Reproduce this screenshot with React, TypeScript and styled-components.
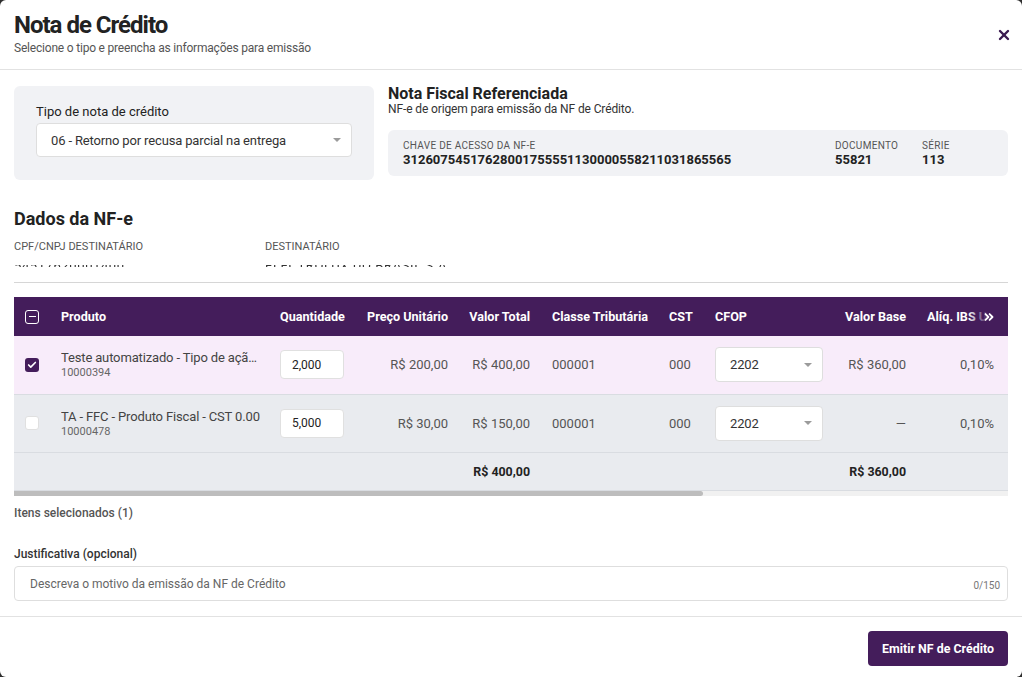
import styled, { createGlobalStyle } from 'styled-components'
import { Check, ChevronsRight, X } from 'lucide-react'

const PURPLE = '#441d5b'

const GlobalStyle = createGlobalStyle`
  html, body {
    margin: 0;
    padding: 0;
    background: #2e2e2e;
  }
  body {
    font-family: Roboto, "Liberation Sans", Arial, sans-serif;
    color: #222;
  }
  * { box-sizing: border-box; }
`

const Modal = styled.div`
  width: 1022px;
  height: 677px;
  background: #fff;
  border-radius: 6px;
  display: flex;
  flex-direction: column;
  overflow: hidden;
`

const Header = styled.header`
  height: 70px;
  border-bottom: 1px solid #e2e2e2;
  display: flex;
  justify-content: space-between;
  align-items: center;
  padding: 0 10px 0 14px;
`

const TitleBlock = styled.div`
  align-self: flex-start;
  padding-top: 11px;
`

const Title = styled.h1`
  margin: 0;
  font-size: 24px;
  line-height: 28px;
  font-weight: 700;
  letter-spacing: -1px;
  color: #222;
`

const Subtitle = styled.p`
  margin: 1px 0 0;
  font-size: 12px;
  line-height: 16px;
  letter-spacing: -0.2px;
  color: #555;
`

const CloseButton = styled.button`
  border: 0;
  background: none;
  padding: 0;
  width: 16px;
  height: 16px;
  display: flex;
  color: #3b1a50;
  cursor: pointer;
`

const Body = styled.main`
  flex: 1;
  padding: 16px 14px 0;
  display: flex;
  flex-direction: column;
`

const TopRow = styled.div`
  display: grid;
  grid-template-columns: 360px 1fr;
  gap: 14px;
  align-items: start;
`

const TypeCard = styled.div`
  background: #f1f2f5;
  border-radius: 6px;
  padding: 18px 22px 23px;
`

const FieldLabel = styled.label`
  display: block;
  font-size: 13px;
  line-height: 16px;
  color: #222;
  margin-bottom: 3px;
`

const SelectBox = styled.div<{ $width?: number; $height: number }>`
  width: ${p => (p.$width ? `${p.$width}px` : '100%')};
  height: ${p => p.$height}px;
  background: #fff;
  border: 1px solid #dedede;
  border-radius: 4px;
  display: flex;
  align-items: center;
  justify-content: space-between;
  padding: 0 10px 0 14px;
  font-size: 13px;
  letter-spacing: -0.15px;
  color: #333;
`

const Caret = styled.span`
  width: 0;
  height: 0;
  border-left: 4px solid transparent;
  border-right: 4px solid transparent;
  border-top: 4px solid #9b9b9b;
`

const RefTitle = styled.h2`
  margin: 0;
  font-size: 16px;
  line-height: 16px;
  font-weight: 700;
  color: #222;
`

const RefSubtitle = styled.p`
  margin: 0;
  font-size: 12px;
  line-height: 14px;
  letter-spacing: -0.12px;
  color: #333;
`

const InfoBox = styled.div`
  margin-top: 14px;
  height: 46px;
  background: #f1f2f5;
  border-radius: 6px;
  padding: 0 15px;
  display: flex;
  align-items: center;
`

const InfoField = styled.div<{ $width?: number }>`
  ${p => (p.$width ? `width: ${p.$width}px;` : 'flex: 1;')}
`

const InfoLabel = styled.div`
  font-size: 10px;
  line-height: 12px;
  color: #555;
  letter-spacing: 0.3px;
  text-transform: uppercase;
`

const InfoValue = styled.div`
  font-size: 13px;
  line-height: 15px;
  font-weight: 700;
  color: #222;
`

const SectionTitle = styled.h3`
  margin: 28px 0 0;
  font-size: 18px;
  line-height: 22px;
  font-weight: 700;
  color: #222;
`

const DataGrid = styled.div`
  margin-top: 10px;
  display: grid;
  grid-template-columns: 251px 1fr;
  padding-bottom: 14px;
  border-bottom: 1px solid #d6d6d6;
`

const DataLabel = styled.div`
  font-size: 11px;
  line-height: 13px;
  color: #555;
  text-transform: uppercase;
`

const ClippedValue = styled.div`
  margin-top: 6px;
  height: 9px;
  overflow: hidden;
  font-size: 13px;
  line-height: 13px;
  letter-spacing: 0.6px;
  color: #333;
  -webkit-mask-image: linear-gradient(to bottom, #000 0, #000 2px, transparent 2px, transparent 6px, #000 6px, #000 8px, transparent 8px);
  mask-image: linear-gradient(to bottom, #000 0, #000 2px, transparent 2px, transparent 6px, #000 6px, #000 8px, transparent 8px);
`

const TableWrap = styled.div`
  margin-top: 14px;
  position: relative;
  overflow: hidden;
`

const Table = styled.table<{ $width: number }>`
  width: ${p => p.$width}px;
  table-layout: fixed;
  border-collapse: collapse;
`

const Th = styled.th<{ $align?: string; $padRight?: number }>`
  height: 39px;
  background: ${PURPLE};
  color: #fff;
  font-size: 12.6px;
  font-weight: 700;
  padding: 0 ${p => p.$padRight ?? 10}px 0 10px;
  text-align: ${p => p.$align || 'left'};
  white-space: nowrap;
  overflow: hidden;
`

const Tr = styled.tr<{ $bg: string }>`
  background: ${p => p.$bg};
  border-bottom: 1px solid #d9dce1;
`

const Td = styled.td<{ $align?: string; $bold?: boolean; $h?: number; $padRight?: number }>`
  height: ${p => p.$h || 58}px;
  padding: 0 ${p => p.$padRight ?? 10}px 0 10px;
  text-align: ${p => p.$align || 'left'};
  font-size: ${p => (p.$bold ? 12.4 : 13)}px;
  font-weight: ${p => (p.$bold ? 700 : 400)};
  color: ${p => (p.$bold ? '#222' : '#555')};
  white-space: nowrap;
  overflow: hidden;
`

const CheckCell = styled.td`
  padding: 0 0 0 11px;
`

const CheckHead = styled.th`
  background: ${PURPLE};
  padding: 0 0 0 11px;
`

const Box = styled.span<{ $kind: 'checked' | 'empty' | 'indeterminate' }>`
  width: 14px;
  height: 14px;
  border-radius: 3px;
  display: flex;
  align-items: center;
  justify-content: center;
  background: ${p => (p.$kind === 'checked' ? PURPLE : p.$kind === 'empty' ? '#fff' : 'transparent')};
  border: ${p => (p.$kind === 'indeterminate' ? '1.5px solid #fff' : p.$kind === 'empty' ? '1px solid #e0e0e0' : 'none')};
  color: #fff;
`

const Dash = styled.span`
  width: 7px;
  height: 1.5px;
  background: #fff;
`

const ProductName = styled.div`
  width: 199px;
  font-size: 13px;
  line-height: 16px;
  letter-spacing: -0.15px;
  color: #444;
  overflow: hidden;
  text-overflow: ellipsis;
  white-space: nowrap;
`

const ProductCode = styled.div`
  font-size: 11px;
  line-height: 13px;
  color: #666;
`

const QtyInput = styled.div`
  width: 64px;
  height: 29px;
  background: #fff;
  border: 1px solid #e0e0e0;
  border-radius: 4px;
  display: flex;
  align-items: center;
  padding-left: 11px;
  font-size: 12px;
  color: #222;
`

const MoreCols = styled.div`
  position: absolute;
  top: 0;
  right: 0;
  width: 40px;
  height: 39px;
  display: flex;
  align-items: center;
  justify-content: flex-end;
  padding-right: 12px;
  color: #fff;
  background: linear-gradient(to right, rgba(68, 29, 91, 0), ${PURPLE} 50%);
`

const ScrollTrack = styled.div`
  height: 5px;
  background: #f1f1f1;
`

const ScrollThumb = styled.div`
  height: 100%;
  background: #bdbdbd;
  border-radius: 0 3px 3px 0;
`

const SelectedInfo = styled.div`
  margin-top: 10px;
  font-size: 12px;
  line-height: 14px;
  font-weight: 500;
  color: #555;
`

const JustLabel = styled.div`
  margin-top: 27px;
  font-size: 12px;
  line-height: 14px;
  font-weight: 500;
  color: #333;
`

const TextArea = styled.div`
  margin-top: 5px;
  height: 35px;
  border: 1px solid #dedede;
  border-radius: 4px;
  position: relative;
  padding: 9px 15px 0;
  font-size: 12px;
  line-height: 16px;
  color: #666;
`

const Counter = styled.span`
  position: absolute;
  right: 7px;
  bottom: 6px;
  font-size: 10px;
  color: #777;
`

const Footer = styled.footer`
  height: 61px;
  border-top: 1px solid #e2e2e2;
  display: flex;
  justify-content: flex-end;
  align-items: flex-start;
  padding: 14px 14px 0;
`

const PrimaryButton = styled.button`
  height: 35px;
  padding: 0 14px;
  border: 0;
  border-radius: 4px;
  background: ${PURPLE};
  color: #fff;
  font-family: inherit;
  font-size: 12.4px;
  font-weight: 700;
  cursor: pointer;
`

type Col = { label: string; width: number; align?: string; padRight?: number }

const columns: Col[] = [
  { label: 'Produto', width: 219 },
  { label: 'Quantidade', width: 87 },
  { label: 'Preço Unitário', width: 101, align: 'right' },
  { label: 'Valor Total', width: 84, align: 'right', padRight: 12 },
  { label: 'Classe Tributária', width: 117 },
  { label: 'CST', width: 46 },
  { label: 'CFOP', width: 127 },
  { label: 'Valor Base', width: 84, align: 'right' },
  { label: 'Alíq. IBS UF', width: 88, align: 'right' },
  { label: 'Valor IBS UF', width: 100, align: 'right' },
  { label: 'Alíq. IBS Mun', width: 100, align: 'right' },
  { label: 'Valor IBS Mun', width: 80, align: 'right' },
  { label: 'Alíq. CBS', width: 84, align: 'right' },
  { label: 'Valor CBS', width: 80, align: 'right' },
]

const CHECK_COL = 37
const tableWidth = columns.reduce((s, c) => s + c.width, CHECK_COL)
const VIEW_WIDTH = 994

const items = [
  {
    name: 'Teste automatizado - Tipo de ação devolução',
    code: '10000394',
    qty: '2,000',
    price: 'R$ 200,00',
    total: 'R$ 400,00',
    base: 'R$ 360,00',
    checked: true,
  },
  {
    name: 'TA - FFC - Produto Fiscal - CST 0.00',
    code: '10000478',
    qty: '5,000',
    price: 'R$ 30,00',
    total: 'R$ 150,00',
    base: '—',
    checked: false,
  },
]

export default function App() {
  return (
    <>
      <GlobalStyle />
      <Modal>
        <Header>
          <TitleBlock>
            <Title>Nota de Crédito</Title>
            <Subtitle>Selecione o tipo e preencha as informações para emissão</Subtitle>
          </TitleBlock>
          <CloseButton aria-label="Fechar">
            <X size={16} strokeWidth={3.6} />
          </CloseButton>
        </Header>

        <Body>
          <TopRow>
            <TypeCard>
              <FieldLabel>Tipo de nota de crédito</FieldLabel>
              <SelectBox $height={34}>
                <span>06 - Retorno por recusa parcial na entrega</span>
                <Caret />
              </SelectBox>
            </TypeCard>
            <div>
              <RefTitle>Nota Fiscal Referenciada</RefTitle>
              <RefSubtitle>NF-e de origem para emissão da NF de Crédito.</RefSubtitle>
              <InfoBox>
                <InfoField>
                  <InfoLabel>Chave de acesso da NF-e</InfoLabel>
                  <InfoValue>31260754517628001755551130000558211031865565</InfoValue>
                </InfoField>
                <InfoField $width={87}>
                  <InfoLabel>Documento</InfoLabel>
                  <InfoValue>55821</InfoValue>
                </InfoField>
                <InfoField $width={71}>
                  <InfoLabel>Série</InfoLabel>
                  <InfoValue>113</InfoValue>
                </InfoField>
              </InfoBox>
            </div>
          </TopRow>

          <SectionTitle>Dados da NF-e</SectionTitle>
          <DataGrid>
            <div>
              <DataLabel>CPF/CNPJ Destinatário</DataLabel>
              <ClippedValue>54517620001400</ClippedValue>
            </div>
            <div>
              <DataLabel>Destinatário</DataLabel>
              <ClippedValue>ELECTROLUX DO BRASIL S.A.</ClippedValue>
            </div>
          </DataGrid>

          <TableWrap>
            <Table $width={tableWidth}>
              <colgroup>
                <col style={{ width: CHECK_COL }} />
                {columns.map(c => (
                  <col key={c.label} style={{ width: c.width }} />
                ))}
              </colgroup>
              <thead>
                <tr>
                  <CheckHead>
                    <Box $kind="indeterminate">
                      <Dash />
                    </Box>
                  </CheckHead>
                  {columns.map(c => (
                    <Th key={c.label} $align={c.align} $padRight={c.padRight}>
                      {c.label}
                    </Th>
                  ))}
                </tr>
              </thead>
              <tbody>
                {items.map(item => (
                  <Tr key={item.code} $bg={item.checked ? '#f8ecfa' : '#e9ebef'}>
                    <CheckCell>
                      <Box $kind={item.checked ? 'checked' : 'empty'}>
                        {item.checked && <Check size={10} strokeWidth={4} />}
                      </Box>
                    </CheckCell>
                    <Td>
                      <ProductName>{item.name}</ProductName>
                      <ProductCode>{item.code}</ProductCode>
                    </Td>
                    <Td>
                      <QtyInput>{item.qty}</QtyInput>
                    </Td>
                    <Td $align="right">{item.price}</Td>
                    <Td $align="right" $padRight={12}>{item.total}</Td>
                    <Td>000001</Td>
                    <Td>000</Td>
                    <Td>
                      <SelectBox $width={108} $height={35}>
                        <span>2202</span>
                        <Caret />
                      </SelectBox>
                    </Td>
                    <Td $align="right">{item.base}</Td>
                    <Td $align="right">0,10%</Td>
                    <Td $align="right">R$ 0,40</Td>
                    <Td $align="right">0,00%</Td>
                    <Td $align="right">R$ 0,00</Td>
                    <Td $align="right">0,90%</Td>
                    <Td $align="right">R$ 3,60</Td>
                  </Tr>
                ))}
                <Tr $bg="#e9ebef">
                  <Td $h={38} />
                  <Td $h={38} />
                  <Td $h={38} />
                  <Td $h={38} />
                  <Td $h={38} $align="right" $bold $padRight={12}>
                    R$ 400,00
                  </Td>
                  <Td $h={38} />
                  <Td $h={38} />
                  <Td $h={38} />
                  <Td $h={38} $align="right" $bold>
                    R$ 360,00
                  </Td>
                  <Td $h={38} />
                  <Td $h={38} />
                  <Td $h={38} />
                  <Td $h={38} />
                  <Td $h={38} />
                  <Td $h={38} />
                </Tr>
              </tbody>
            </Table>
            <MoreCols>
              <ChevronsRight size={14} strokeWidth={3.2} />
            </MoreCols>
            <ScrollTrack>
              <ScrollThumb style={{ width: `${(VIEW_WIDTH / tableWidth) * 100}%` }} />
            </ScrollTrack>
          </TableWrap>

          <SelectedInfo>Itens selecionados (1)</SelectedInfo>

          <JustLabel>Justificativa (opcional)</JustLabel>
          <TextArea>
            Descreva o motivo da emissão da NF de Crédito
            <Counter>0/150</Counter>
          </TextArea>
        </Body>

        <Footer>
          <PrimaryButton>Emitir NF de Crédito</PrimaryButton>
        </Footer>
      </Modal>
    </>
  )
}
